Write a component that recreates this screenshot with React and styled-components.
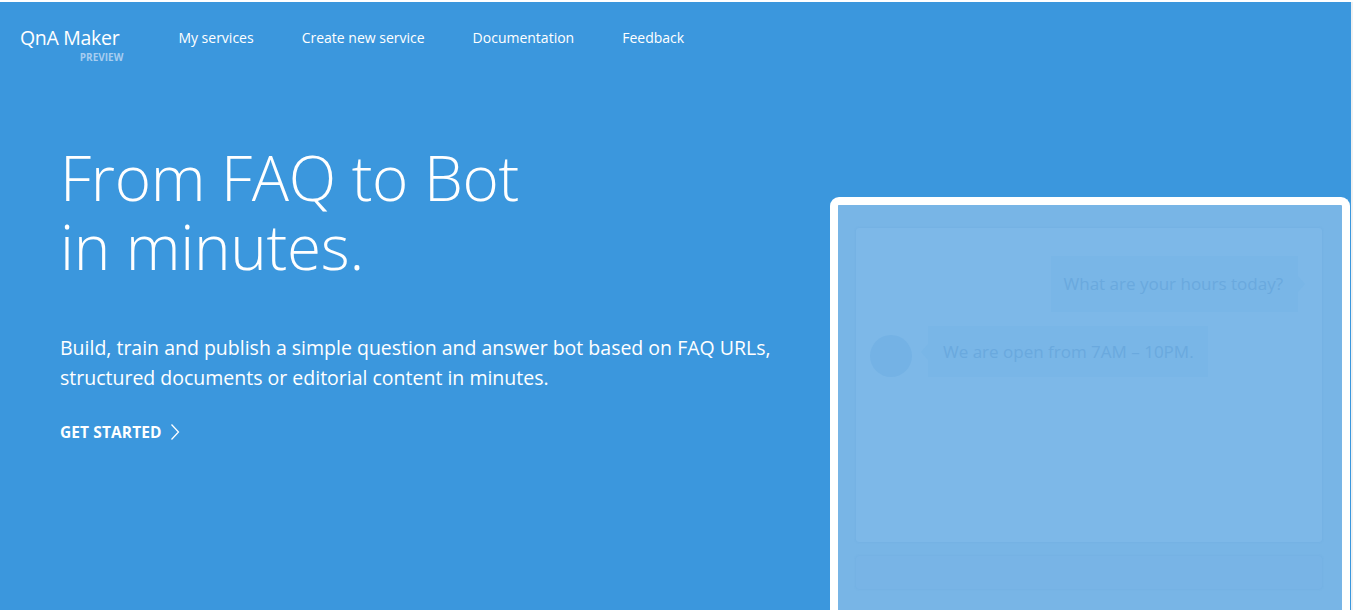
import React from "react";
import styled, {createGlobalStyle} from "styled-components";

const GlobalStyle = createGlobalStyle`
  *, *::before, *::after {
    box-sizing: border-box;
  }

  html, body {
    margin: 0;
    padding: 0;
    background: #f1f1f1;
    font-family: "Open Sans", "Noto Sans", sans-serif;
  }
`

const Page = styled.div`
  padding: 2px 2px 0 0;
  height: 610px;
  background: linear-gradient(#ffffff, #ffffff) top / 100% 2px no-repeat, #f1f1f1;
`

const Hero = styled.div`
  height: 608px;
  background: #3b97dd;
  color: #fff;
  overflow: hidden;
  display: flex;
  flex-direction: column;
`

const Header = styled.header`
  display: flex;
  align-items: flex-start;
  padding: 24px 0 0 20px;
`

const Logo = styled.div`
  display: flex;
  flex-direction: column;
  align-items: flex-end;
  margin-right: 55px;

  & .name {
    font-size: 19.5px;
    line-height: 24px;
    letter-spacing: -0.3px;
    margin-right: 4px;
  }

  & .tag {
    font-size: 10px;
    font-weight: 700;
    line-height: 12px;
    color: #a6cdf0;
    margin-top: 1px;
  }
`

const Nav = styled.nav`
  display: flex;
  gap: 48px;
  padding-top: 2px;

  & a {
    color: #fff;
    text-decoration: none;
    font-size: 14px;
    line-height: 20px;
  }
`

const Content = styled.div`
  flex: 1;
  display: flex;
  justify-content: space-between;
  align-items: flex-start;
`

const Intro = styled.div`
  padding: 80px 0 0 60px;

  & h1 {
    margin: 0;
    font-weight: 300;
    font-size: 62px;
    line-height: 69px;
    letter-spacing: -0.3px;
  }

  & p {
    margin: 52px 0 0;
    font-size: 19.5px;
    line-height: 30px;
    width: 760px;
  }
`

const Cta = styled.a`
  display: inline-flex;
  align-items: center;
  gap: 8px;
  margin-top: 28px;
  color: #fff;
  font-size: 15.5px;
  font-weight: 700;
  letter-spacing: 0.1px;
  text-decoration: none;
`

const Device = styled.div`
  margin: 134px 1px 0 0;
  width: 520px;
  height: 430px;
  flex-shrink: 0;
  border: 8px solid #fff;
  border-bottom: none;
  border-radius: 9px 9px 0 0;
  background: #78b5e6;
  padding: 23px 20px 0 18px;
  display: flex;
  flex-direction: column;
  gap: 14px;
`

const Chat = styled.div`
  height: 314px;
  background: #7db8e8;
  border-radius: 3px;
  box-shadow: 0 0 2px rgba(80, 150, 210, 0.25);
  display: flex;
  flex-direction: column;
  padding: 28px 24px 0 14px;
  gap: 14px;
`

const Row = styled.div`
  display: flex;
  align-items: flex-start;
  justify-content: ${p => (p.$mine ? "flex-end" : "flex-start")};
  gap: 16px;
`

const Avatar = styled.div`
  width: 42px;
  height: 42px;
  margin-top: 9px;
  border-radius: 50%;
  background: #74b2e5;
`

const Bubble = styled.div`
  position: relative;
  background: #79b6e7;
  color: #6aa9de;
  font-size: 17px;
  line-height: 24px;
  white-space: nowrap;
  padding: ${p => (p.$mine ? "16px 15px 16px 13px" : "14px 14px 13px 15px")};

  &::after {
    content: "";
    position: absolute;
    top: 50%;
    margin-top: -8px;
    border: 8px solid transparent;
    ${p => (p.$mine
      ? "right: -15px; border-left: 7px solid #79b6e7;"
      : "left: -15px; border-right: 7px solid #79b6e7;")}
  }
`

const InputBar = styled.div`
  height: 33px;
  background: #78b4e6;
  border-radius: 3px;
  box-shadow: 0 0 2px rgba(80, 150, 210, 0.25);
`

const App = () => {
  return (
    <>
      <GlobalStyle/>
      <Page>
        <Hero>
          <Header>
            <Logo>
              <span className="name">QnA Maker</span>
              <span className="tag">PREVIEW</span>
            </Logo>
            <Nav>
              <a href="#">My services</a>
              <a href="#">Create new service</a>
              <a href="#">Documentation</a>
              <a href="#">Feedback</a>
            </Nav>
          </Header>
          <Content>
            <Intro>
              <h1>From FAQ to Bot<br/>in minutes.</h1>
              <p>
                Build, train and publish a simple question and answer bot based on FAQ URLs,
                structured documents or editorial content in minutes.
              </p>
              <Cta href="#">
                GET STARTED
                <svg width="10" height="18" viewBox="0 0 10 18" fill="none">
                  <path d="M1.5 1.5L8.5 9L1.5 16.5" stroke="#fff" strokeWidth="1.3"/>
                </svg>
              </Cta>
            </Intro>
            <Device>
              <Chat>
                <Row $mine>
                  <Bubble $mine>What are your hours today?</Bubble>
                </Row>
                <Row>
                  <Avatar/>
                  <Bubble>We are open from 7AM – 10PM.</Bubble>
                </Row>
              </Chat>
              <InputBar/>
            </Device>
          </Content>
        </Hero>
      </Page>
    </>
  )
}

export default App
